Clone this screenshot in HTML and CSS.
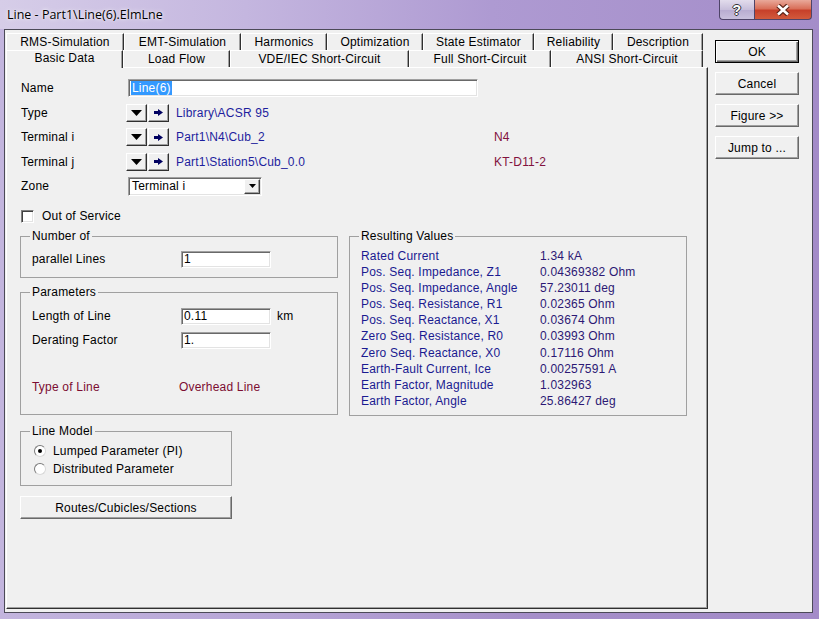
FILE: index.html
```html
<!DOCTYPE html>
<html>
<head>
<meta charset="utf-8">
<title>Line</title>
<link rel="stylesheet" href="styles.css">
</head>
<body>
<div class="window">
  <div class="titlebar">
    <span class="title">Line - Part1\Line(6).ElmLne</span>
    <div class="caption">
      <div class="cbtn help">?</div>
      <div class="cbtn close">
        <svg width="22" height="12" viewBox="0 0 22 12"><path d="M6 1.5 16 10.5M16 1.5 6 10.5" stroke="#5a2418" stroke-width="5"/><path d="M6 1.5 16 10.5M16 1.5 6 10.5" stroke="#fff" stroke-width="2.6"/></svg>
      </div>
    </div>
  </div>
  <div class="client">
    <div class="tabarea">
      <div class="tabrow back">
        <div class="tab">RMS-Simulation</div>
        <div class="tab">EMT-Simulation</div>
        <div class="tab">Harmonics</div>
        <div class="tab">Optimization</div>
        <div class="tab">State Estimator</div>
        <div class="tab">Reliability</div>
        <div class="tab">Description</div>
      </div>
      <div class="tabrow front">
        <div class="tab sel">Basic Data</div>
        <div class="tab">Load Flow</div>
        <div class="tab">VDE/IEC Short-Circuit</div>
        <div class="tab">Full Short-Circuit</div>
        <div class="tab">ANSI Short-Circuit</div>
      </div>
      <div class="panel">
        <div class="fields">
          <div class="frow h24"><span class="lbl w107">Name</span><div class="input name"><span class="selected">Line(6)</span></div></div>
          <div class="frow h25"><span class="lbl w105">Type</span>
            <span class="pbtn"><svg width="11" height="6" viewBox="0 0 11 6"><path d="M0 0h11L5.5 6z" fill="#000"/></svg></span>
            <span class="pbtn"><svg width="9" height="7" viewBox="0 0 9 7"><path d="M0 2h4V0l5 3.5-5 3.5V5H0z" fill="#000060"/></svg></span>
            <span class="link">Library\ACSR 95</span></div>
          <div class="frow h24"><span class="lbl w105">Terminal i</span>
            <span class="pbtn"><svg width="11" height="6" viewBox="0 0 11 6"><path d="M0 0h11L5.5 6z" fill="#000"/></svg></span>
            <span class="pbtn"><svg width="9" height="7" viewBox="0 0 9 7"><path d="M0 2h4V0l5 3.5-5 3.5V5H0z" fill="#000060"/></svg></span>
            <span class="link">Part1\N4\Cub_2</span><span class="node">N4</span></div>
          <div class="frow h25"><span class="lbl w105">Terminal j</span>
            <span class="pbtn"><svg width="11" height="6" viewBox="0 0 11 6"><path d="M0 0h11L5.5 6z" fill="#000"/></svg></span>
            <span class="pbtn"><svg width="9" height="7" viewBox="0 0 9 7"><path d="M0 2h4V0l5 3.5-5 3.5V5H0z" fill="#000060"/></svg></span>
            <span class="link">Part1\Station5\Cub_0.0</span><span class="node">KT-D11-2</span></div>
          <div class="frow h24"><span class="lbl w107">Zone</span>
            <div class="input select"><span>Terminal i</span><span class="ddbtn"><svg width="7" height="4" viewBox="0 0 7 4"><path d="M0 0h7L3.5 4z" fill="#000"/></svg></span></div></div>
          <div class="frow check-row"><span class="checkbox"></span><span>Out of Service</span></div>
        </div>
        <div class="columns">
          <div class="leftcol">
            <fieldset class="group num">
              <legend>Number of</legend>
              <div class="grow h20"><span class="glbl">parallel Lines</span><div class="input small">1</div></div>
            </fieldset>
            <fieldset class="group params">
              <legend>Parameters</legend>
              <div class="grow h24"><span class="glbl">Length of Line</span><div class="input small">0.11</div><span class="unit">km</span></div>
              <div class="grow h24"><span class="glbl">Derating Factor</span><div class="input small">1.</div></div>
              <div class="grow h24 typerow"><span class="glbl2">Type of Line</span><span>Overhead Line</span></div>
            </fieldset>
            <fieldset class="group model">
              <legend>Line Model</legend>
              <div class="rrow"><span class="radio on"></span><span>Lumped Parameter (PI)</span></div>
              <div class="rrow"><span class="radio"></span><span>Distributed Parameter</span></div>
            </fieldset>
            <div class="btn routes">Routes/Cubicles/Sections</div>
          </div>
          <fieldset class="group results">
            <legend>Resulting Values</legend>
            <div class="res">
              <span>Rated Current</span><span class="val">1.34 kA</span>
              <span>Pos. Seq. Impedance, Z1</span><span class="val">0.04369382 Ohm</span>
              <span>Pos. Seq. Impedance, Angle</span><span class="val">57.23011 deg</span>
              <span>Pos. Seq. Resistance, R1</span><span class="val">0.02365 Ohm</span>
              <span>Pos. Seq. Reactance, X1</span><span class="val">0.03674 Ohm</span>
              <span>Zero Seq. Resistance, R0</span><span class="val">0.03993 Ohm</span>
              <span>Zero Seq. Reactance, X0</span><span class="val">0.17116 Ohm</span>
              <span>Earth-Fault Current, Ice</span><span class="val">0.00257591 A</span>
              <span>Earth Factor, Magnitude</span><span class="val">1.032963</span>
              <span>Earth Factor, Angle</span><span class="val">25.86427 deg</span>
            </div>
          </fieldset>
        </div>
      </div>
    </div>
    <div class="side">
      <div class="btn default">OK</div>
      <div class="btn">Cancel</div>
      <div class="btn">Figure &gt;&gt;</div>
      <div class="btn">Jump to ...</div>
    </div>
  </div>
</div>
</body>
</html>
```
FILE: styles.css
```css
* { box-sizing: border-box; }
body {
  margin: 0;
  font-family: "Liberation Sans", Arial, sans-serif;
  font-size: 12px;
  letter-spacing: 0.2px;
  color: #000;
}
.window {
  width: 819px;
  height: 619px;
  display: flex;
  flex-direction: column;
  overflow: hidden;
  background: linear-gradient(to right, #c3b5de 0%, #b6a4d6 35%, #a58ec9 65%, #a38bc8 100%);
}
.titlebar {
  height: 29px;
  flex: none;
  display: flex;
  justify-content: space-between;
  align-items: flex-start;
  padding: 0 7px;
  background: linear-gradient(to right, #d6cde8 0%, #c4b6df 30%, #ae9ad2 60%, #a48dc9 100%);
}
.title {
  font-family: "Open Sans", "Liberation Sans", sans-serif;
  font-size: 12.5px;
  letter-spacing: 0;
  line-height: 28px;
  padding-top: 1px;
  color: #000;
  text-shadow: 0 0 5px rgba(255,255,255,0.9), 0 0 2px rgba(255,255,255,0.8);
}
.caption {
  display: flex;
}
.cbtn {
  height: 20px;
  display: flex;
  align-items: center;
  justify-content: center;
  border: 1px solid #4e4468;
  border-top: none;
}
.help {
  width: 35px;
  border-right: none;
  border-radius: 0 0 0 4px;
  background: linear-gradient(#e2dcec, #c8bfdb 50%, #b7abd0 51%, #c9c0dd);
  color: #fff;
  font-weight: bold;
  font-size: 14px;
  text-shadow: 1px 0 #333, -1px 0 #333, 0 1px #333, 0 -1px #333;
}
.close {
  width: 58px;
  border-radius: 0 0 4px 0;
  background: linear-gradient(#e9a99a, #d9705a 45%, #c7402a 55%, #d25a3c);
}
.client {
  flex: 1;
  margin: 0 6px 6px 4px;
  border: 1px solid #4c4a58;
  background: #f0f0f0;
  display: flex;
}
.tabarea {
  width: 703px;
  padding: 3px 0 0 1px;
  display: flex;
  flex-direction: column;
}
.tabrow {
  display: flex;
  width: 697px;
  height: 17px;
}
.tab {
  height: 17px;
  border-top: 1px solid #fff;
  border-left: 1px solid #fff;
  border-right: 1px solid #303030;
  box-shadow: inset -1px 0 #a0a0a0;
  background: #f0f0f0;
  text-align: center;
  line-height: 16px;
  white-space: nowrap;
}
.back .tab:nth-child(1) { width: 118px; }
.back .tab:nth-child(2) { width: 117px; }
.back .tab:nth-child(3) { width: 86px; }
.back .tab:nth-child(4) { width: 96px; }
.back .tab:nth-child(5) { width: 111px; }
.back .tab:nth-child(6) { width: 79px; }
.back .tab:nth-child(7) { width: 90px; }
.front .tab:nth-child(1) { width: 117px; }
.front .tab:nth-child(2) { width: 107px; }
.front .tab:nth-child(3) { width: 179px; }
.front .tab:nth-child(4) { width: 142px; }
.front .tab:nth-child(5) { width: 152px; }
.front .tab { line-height: 17px; }
.tab.sel {
  position: relative;
  z-index: 1;
  height: 18px;
  margin-bottom: -1px;
  line-height: 14px;
}
.panel {
  width: 702px;
  height: 542px;
  border-top: 1px solid #fff;
  border-left: 1px solid #fff;
  border-right: 1px solid #303030;
  border-bottom: 1px solid #303030;
  box-shadow: inset -1px -1px 0 #a0a0a0;
}
.fields {
  padding: 8px 0 0 14px;
}
.frow {
  display: flex;
  align-items: center;
}
.h24 { height: 24px; }
.h25 { height: 25px; }
.h20 { height: 20px; }
.lbl { flex: none; }
.w107 { width: 107px; }
.w105 { width: 105px; }
.input {
  height: 18px;
  background: #fff;
  border: 1px solid;
  border-color: #a0a0a0 #fff #fff #a0a0a0;
  box-shadow: inset 1px 1px 0 #696969, inset -1px -1px 0 #e3e3e3;
  padding: 1px 0 0 2px;
  line-height: 14px;
  white-space: nowrap;
}
.name { width: 350px; }
.selected {
  display: inline-block;
  background: #3399ff;
  color: #fff;
  padding: 0 1px;
  line-height: 14px;
}
.pbtn {
  width: 21px;
  height: 18px;
  margin-right: 1px;
  border: 1px solid;
  border-color: #fff #303030 #303030 #fff;
  box-shadow: inset -1px -1px 0 #a0a0a0;
  background: #f0f0f0;
  display: flex;
  align-items: center;
  justify-content: center;
}
.link {
  margin-left: 6px;
  width: 318px;
  color: #1e1e9e;
}
.node {
  color: #82123e;
}
.select {
  width: 134px;
  height: 19px;
  display: flex;
  align-items: center;
  justify-content: space-between;
  padding: 0 1px 0 3px;
}
.ddbtn {
  width: 16px;
  height: 15px;
  border: 1px solid;
  border-color: #fff #404040 #404040 #fff;
  box-shadow: inset -1px -1px 0 #a0a0a0;
  background: #f0f0f0;
  display: flex;
  align-items: center;
  justify-content: center;
}
.check-row {
  height: 20px;
  margin-top: 8px;
}
.checkbox {
  width: 13px;
  height: 13px;
  margin-right: 8px;
  background: #fff;
  border: 1px solid;
  border-color: #808080 #fff #fff #808080;
  box-shadow: inset 1px 1px 0 #404040, inset -1px -1px 0 #e3e3e3;
}
.columns {
  display: flex;
  gap: 11px;
  margin-top: 3px;
  padding-left: 13px;
  align-items: flex-start;
}
.leftcol {
  width: 318px;
  display: flex;
  flex-direction: column;
}
.group {
  margin: 0;
  min-width: 0;
  border: 1px solid #a0a0a0;
  padding: 5px 11px 7px 11px;
}
.group legend {
  padding: 0 2px;
  margin-left: -2px;
  line-height: 14px;
  font-size: 12px;
}
.num { padding: 6px 11px 8px 11px; }
.grow {
  display: flex;
  align-items: center;
}
.glbl { width: 149px; flex: none; }
.glbl2 { width: 147px; flex: none; }
.small { width: 90px; height: 17px; line-height: 13px; }
.unit { margin-left: 6px; }
.params {
  margin-top: 7px;
  padding: 5px 11px 15px 11px;
}
.typerow {
  margin-top: 23px;
  color: #7c0d32;
}
.model {
  width: 212px;
  margin-top: 9px;
  padding: 4px 11px 7px 11px;
}
.rrow {
  height: 18px;
  display: flex;
  align-items: center;
}
.radio {
  width: 12px;
  height: 12px;
  margin: 0 7px 0 2px;
  border-radius: 50%;
  border: 1px solid;
  border-color: #7a7a7a #d8d8d8 #d8d8d8 #7a7a7a;
  background: #fff;
  display: flex;
  align-items: center;
  justify-content: center;
}
.radio.on::after {
  content: "";
  width: 4px;
  height: 4px;
  border-radius: 50%;
  background: #000;
}
.btn {
  height: 23px;
  border: 1px solid;
  border-color: #fff #696969 #696969 #fff;
  box-shadow: inset -1px -1px 0 #a0a0a0;
  background: #f0f0f0;
  display: flex;
  align-items: center;
  justify-content: center;
}
.routes {
  width: 212px;
  margin-top: 10px;
}
.results {
  width: 338px;
  padding: 5px 11px 6px 11px;
}
.res {
  display: grid;
  grid-template-columns: 179px auto;
  line-height: 16.1px;
  color: #1a1a90;
}
.res .val {
  color: #2c1874;
}
.side {
  padding: 10px 0 0 7px;
  display: flex;
  flex-direction: column;
  gap: 9px;
}
.side .btn {
  width: 84px;
}
.side .btn.default {
  border-color: #000;
  box-shadow: inset 1px 1px 0 #fff, inset -1px -1px 0 #696969, inset -2px -2px 0 #a0a0a0;
}
```
